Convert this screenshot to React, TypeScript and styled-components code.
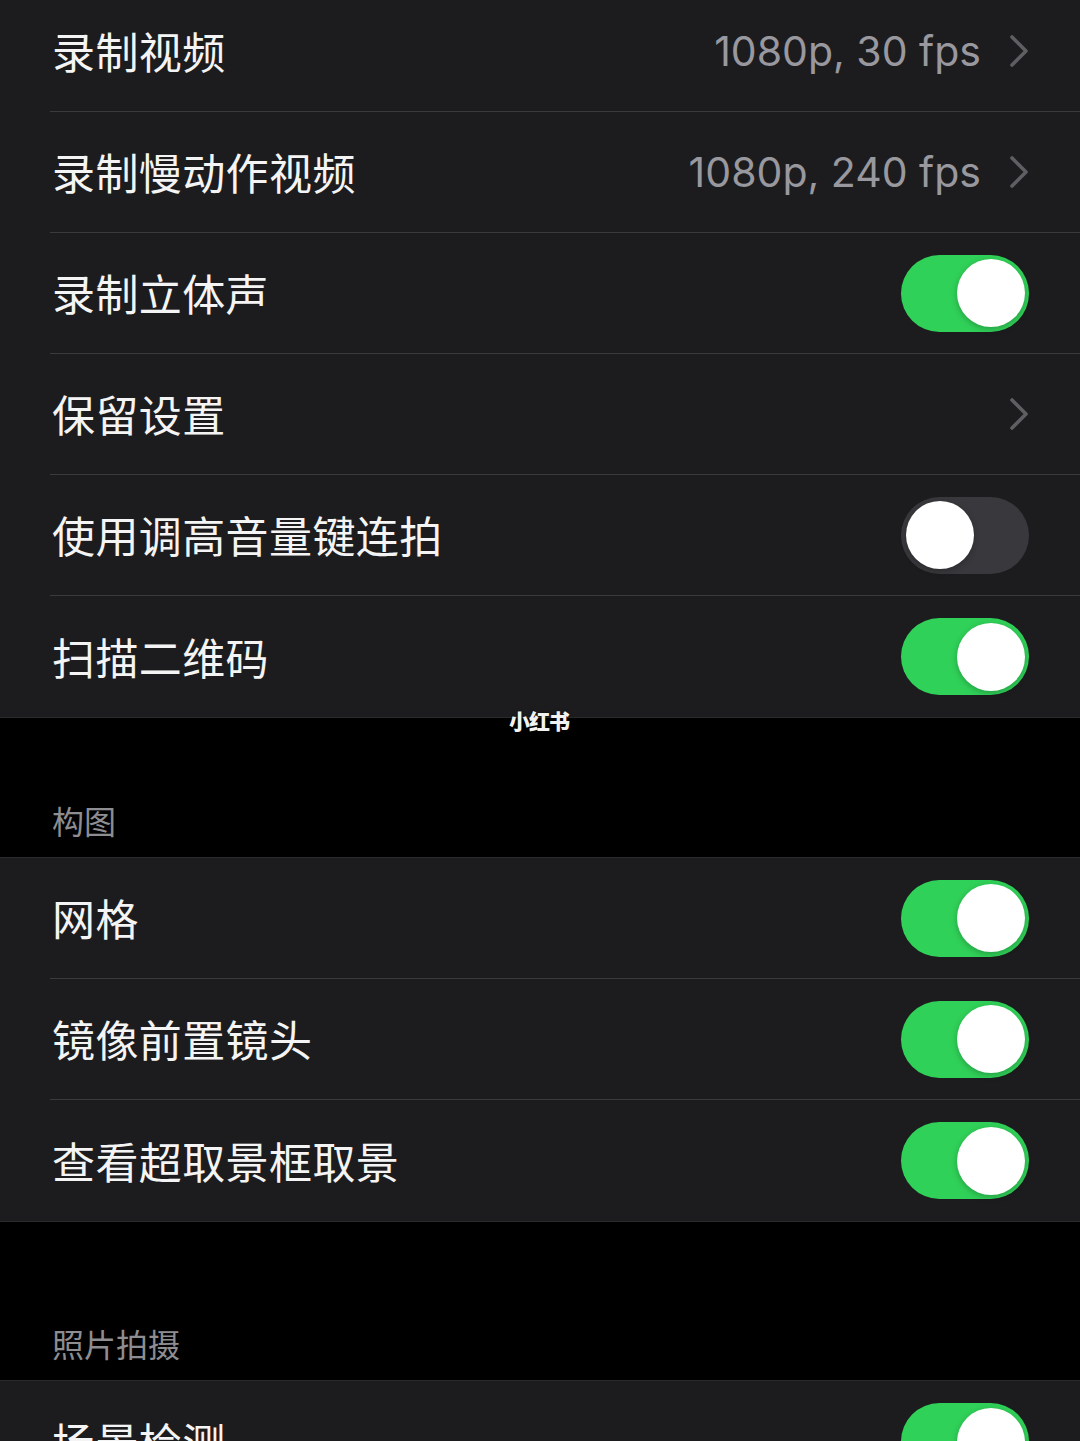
import React from "react";
import styled, { createGlobalStyle } from "styled-components";

const Global = createGlobalStyle`
  html, body { margin: 0; padding: 0; background: #000; }
  body { font-family: "Noto Sans CJK SC", "Noto Sans", sans-serif; overflow: hidden; }
`;

const Page = styled.div`
  position: relative;
  width: 1080px;
  height: 1441px;
  overflow: hidden;
  background: #000;
`;

const Group = styled.section<{ $shift?: number }>`
  background: #1c1c1e;
  margin-top: ${(p) => p.$shift ?? 0}px;
  border-top: 1px solid #2a2a2c;
  border-bottom: 1px solid #2a2a2c;
`;

const Row = styled.div`
  padding-left: 50px;
  &:last-child > div { border-bottom: none; height: 121px; }
`;

const RowInner = styled.div`
  height: 120px;
  display: flex;
  align-items: center;
  justify-content: space-between;
  padding-right: 51px;
  border-bottom: 1px solid #3a3a3c;
`;

const Label = styled.span`
  font-family: "Noto Sans CJK SC", "Noto Sans", sans-serif;
  font-size: 43px;
  color: #f4f4f5;
  padding-left: 2px;
  letter-spacing: 0.4px;
  margin-top: -2px;
`;

const Accessory = styled.div`
  display: flex;
  align-items: center;
  gap: 28px;
`;

const Value = styled.span`
  font-family: Inter, "Noto Sans", sans-serif;
  font-size: 41px;
  color: #98989e;
  letter-spacing: 0;
`;

const Track = styled.div<{ $on: boolean }>`
  width: 128px;
  height: 77px;
  box-sizing: border-box;
  border-radius: 39px;
  padding: 4.5px;
  display: flex;
  justify-content: ${(p) => (p.$on ? "flex-end" : "flex-start")};
  background: ${(p) => (p.$on ? "#30d158" : "#39393d")};
`;

const Knob = styled.div`
  width: 68px;
  height: 68px;
  border-radius: 50%;
  background: #fff;
  box-shadow: 0 2px 6px rgba(0, 0, 0, 0.25);
`;

const Header = styled.div<{ $h: number }>`
  height: ${(p) => p.$h}px;
  box-sizing: border-box;
  display: flex;
  align-items: flex-end;
  padding: 0 0 17px 52px;
  font-family: "Noto Sans CJK SC", "Noto Sans", sans-serif;
  font-size: 32px;
  line-height: 40px;
  color: #8d8d92;
`;

const Watermark = styled.div`
  position: absolute;
  left: 509px;
  top: 705px;
  font-family: "Noto Sans CJK SC", sans-serif;
  font-weight: 900;
  font-size: 21px;
  letter-spacing: -1px;
  color: #f2f2f2;
  text-shadow: 0 0 3px rgba(0, 0, 0, 0.6);
`;

const Chevron = () => (
  <svg width="20" height="32" viewBox="0 0 20 32">
    <polyline
      points="3,2 17,16 3,30"
      fill="none"
      stroke="#5e5e63"
      strokeWidth="3.6"
      strokeLinecap="round"
      strokeLinejoin="round"
    />
  </svg>
);

type Item =
  | { label: string; kind: "nav"; value?: string }
  | { label: string; kind: "toggle"; on: boolean };

const SettingRow = ({ item }: { item: Item }) => (
  <Row>
    <RowInner>
      <Label>{item.label}</Label>
      <Accessory>
        {item.kind === "nav" ? (
          <>
            {item.value && <Value>{item.value}</Value>}
            <Chevron />
          </>
        ) : (
          <Track $on={item.on}>
            <Knob />
          </Track>
        )}
      </Accessory>
    </RowInner>
  </Row>
);

const group1: Item[] = [
  { label: "录制视频", kind: "nav", value: "1080p, 30 fps" },
  { label: "录制慢动作视频", kind: "nav", value: "1080p, 240 fps" },
  { label: "录制立体声", kind: "toggle", on: true },
  { label: "保留设置", kind: "nav" },
  { label: "使用调高音量键连拍", kind: "toggle", on: false },
  { label: "扫描二维码", kind: "toggle", on: true },
];

const group2: Item[] = [
  { label: "网格", kind: "toggle", on: true },
  { label: "镜像前置镜头", kind: "toggle", on: true },
  { label: "查看超取景框取景", kind: "toggle", on: true },
];

const group3: Item[] = [{ label: "场景检测", kind: "toggle", on: true }];

export default function App() {
  return (
    <Page>
      <Global />
      <Group $shift={-10}>
        {group1.map((it) => (
          <SettingRow key={it.label} item={it} />
        ))}
      </Group>
      <Header $h={139}>构图</Header>
      <Group>
        {group2.map((it) => (
          <SettingRow key={it.label} item={it} />
        ))}
      </Group>
      <Header $h={158}>照片拍摄</Header>
      <Group>
        {group3.map((it) => (
          <SettingRow key={it.label} item={it} />
        ))}
      </Group>
      <Watermark>小红书</Watermark>
    </Page>
  );
}
